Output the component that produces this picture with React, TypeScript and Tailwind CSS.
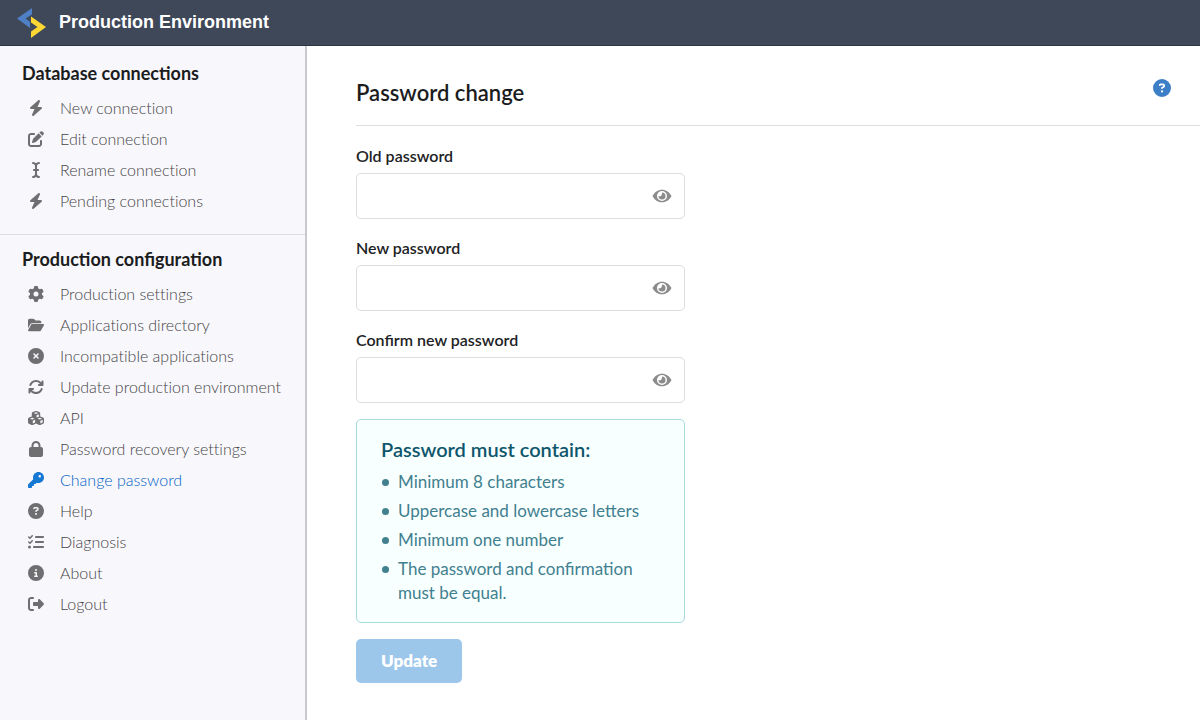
import { useState } from "react";
import type { IconType } from "react-icons";
import {
  FaArrowsRotate,
  FaBolt,
  FaCircleInfo,
  FaCircleQuestion,
  FaCircleXmark,
  FaCubes,
  FaFolderOpen,
  FaGear,
  FaICursor,
  FaKey,
  FaListCheck,
  FaLock,
  FaPenToSquare,
  FaRightFromBracket,
} from "react-icons/fa6";

type NavItem = { label: string; icon: IconType; active?: boolean };

const connectionItems: NavItem[] = [
  { label: "New connection", icon: FaBolt },
  { label: "Edit connection", icon: FaPenToSquare },
  { label: "Rename connection", icon: FaICursor },
  { label: "Pending connections", icon: FaBolt },
];

const configurationItems: NavItem[] = [
  { label: "Production settings", icon: FaGear },
  { label: "Applications directory", icon: FaFolderOpen },
  { label: "Incompatible applications", icon: FaCircleXmark },
  { label: "Update production environment", icon: FaArrowsRotate },
  { label: "API", icon: FaCubes },
  { label: "Password recovery settings", icon: FaLock },
  { label: "Change password", icon: FaKey, active: true },
  { label: "Help", icon: FaCircleQuestion },
  { label: "Diagnosis", icon: FaListCheck },
  { label: "About", icon: FaCircleInfo },
  { label: "Logout", icon: FaRightFromBracket },
];

const rules = [
  "Minimum 8 characters",
  "Uppercase and lowercase letters",
  "Minimum one number",
  "The password and confirmation must be equal.",
];

function Logo() {
  return (
    <svg viewBox="0 0 30 30" className="h-[30px] w-[30px]" aria-hidden="true">
      <path d="M15 0V6.500L8.500 10.500L13 13.800V20L0 10.500Z" fill="#4f7fc4" />
      <path d="M14 8.500L29 19L14 30V23.500L20.500 19L14 14.500Z" fill="#fdd835" />
    </svg>
  );
}

function EyeIcon() {
  return (
    <svg viewBox="0 0 20 14" className="h-[14px] w-5" aria-hidden="true">
      <path
        fillRule="evenodd"
        fill="#8c8c8c"
        d="M0.500 7C2.500 3 6 0.700 10 0.700S17.500 3 19.500 7C17.500 11 14 13.300 10 13.300S2.500 11 0.500 7ZM10 2A5 5 0 0 0 10 12A5 5 0 0 0 10 2Z"
      />
      <path fill="#8c8c8c" d="M10 3.500A3.500 3.500 0 1 1 6.500 7C7.500 8 10.500 7 10 3.500Z" />
    </svg>
  );
}

function NavSection({ title, items }: { title: string; items: NavItem[] }) {
  return (
    <section>
      <h2 className="px-[22px] text-lg leading-6 font-bold text-[#1b1c1d]">{title}</h2>
      <ul className="mt-[7px] [font-variant-ligatures:no-common-ligatures]">
        {items.map(({ label, icon: Icon, active }) => (
          <li key={label}>
            <a
              href="#"
              aria-current={active ? "page" : undefined}
              className={
                active
                  ? "flex items-center gap-4 pl-[28px] text-base leading-[31px] font-light text-[#0062c4]"
                  : "flex items-center gap-4 pl-[28px] text-base leading-[31px] font-light text-[#454548]"
              }
            >
              <span
                className={
                  active
                    ? "flex w-4 justify-center text-[#1678d2]"
                    : "flex w-4 justify-center text-[#6f6f72]"
                }
              >
                <Icon className="size-4 shrink-0" />
              </span>
              {label}
            </a>
          </li>
        ))}
      </ul>
    </section>
  );
}

function PasswordField({ id, label }: { id: string; label: string }) {
  const [visible, setVisible] = useState(false);

  return (
    <div>
      <label htmlFor={id} className="block text-base leading-5 font-semibold text-[#212224]">
        {label}
      </label>
      <div className="mt-[7px] flex h-[46px] items-center rounded-[5px] border border-[#dcdddf] bg-white pr-3">
        <input
          id={id}
          type={visible ? "text" : "password"}
          className="h-full min-w-0 flex-1 px-4 text-base outline-none"
        />
        <button type="button" aria-label="Show password" onClick={() => setVisible(!visible)}>
          <EyeIcon />
        </button>
      </div>
    </div>
  );
}

export default function App() {
  return (
    <div className="flex min-h-screen flex-col bg-white font-['Lato',sans-serif]">
      <header className="flex h-[46px] items-center gap-3 border-b border-[#2c3644] bg-[#3e4859] px-[17px]">
        <Logo />
        <h1 className="pb-[2px] font-['Liberation_Sans',sans-serif] text-lg font-bold text-white">
          Production Environment
        </h1>
      </header>

      <div className="flex flex-1">
        <aside className="w-[307px] shrink-0 border-r-2 border-[#c8c9ce] bg-[#f8f7fb] pt-[15px]">
          <NavSection title="Database connections" items={connectionItems} />
          <hr className="mt-[18px] mb-3 border-[#dddde1]" />
          <NavSection title="Production configuration" items={configurationItems} />
        </aside>

        <main className="flex-1 pt-[31px] pl-[49px]">
          <div className="flex items-start justify-between border-b border-[#dedede] pr-[29px] pb-4">
            <h2 className="text-[22px] leading-8 font-semibold text-[#1b1c1d]">Password change</h2>
            <a href="#" aria-label="Help" className="mt-[2px] text-[#3d7fc6]">
              <FaCircleQuestion className="size-[18px]" />
            </a>
          </div>

          <form className="mt-5 w-[329px]" onSubmit={(e) => e.preventDefault()}>
            <div className="flex flex-col gap-[19px]">
              <PasswordField id="old-password" label="Old password" />
              <PasswordField id="new-password" label="New password" />
              <PasswordField id="confirm-password" label="Confirm new password" />
            </div>

            <div className="mt-4 rounded-[5px] border border-[#a9d9dc] bg-[#f8ffff] px-6 pt-[15px] pb-[17px] text-[#41808f]">
              <h3 className="text-xl leading-7 font-semibold text-[#0e566c]">Password must contain:</h3>
              <ul className="mt-[7px] flex flex-col gap-[5px] text-[17px] leading-6">
                {rules.map((rule) => (
                  <li key={rule} className="flex gap-[9px]">
                    <span className="mt-[9px] ml-px size-[7px] shrink-0 rounded-full bg-[#41808f]" />
                    {rule}
                  </li>
                ))}
              </ul>
            </div>

            <button
              type="submit"
              className="mt-4 h-11 rounded-[5px] bg-[#9cc6ea] px-[25px] text-[17px] font-extrabold text-white"
            >
              Update
            </button>
          </form>
        </main>
      </div>
    </div>
  );
}
